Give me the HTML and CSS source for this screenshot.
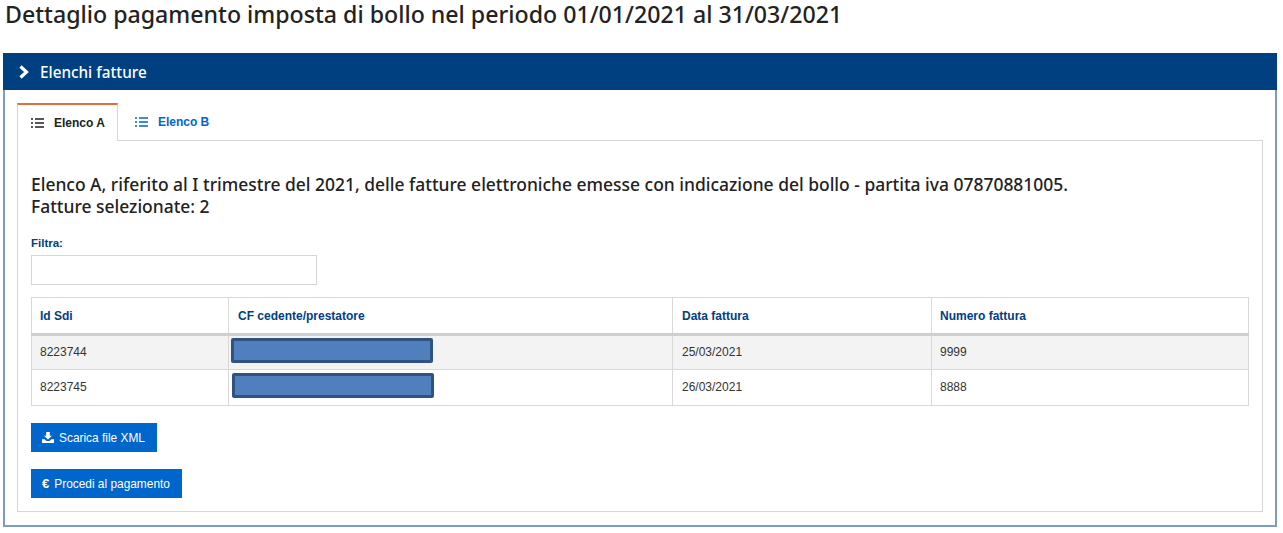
FILE: index.html
```html
<!DOCTYPE html>
<html lang="it">
<head>
    <meta charset="UTF-8">
    <meta name="viewport" content="width=device-width, initial-scale=1.0">
    <title>Dettaglio pagamento imposta di bollo</title>
    <link rel="stylesheet" href="styles.css">
</head>
<body>
    <h1 class="page-title">Dettaglio pagamento imposta di bollo nel periodo 01/01/2021 al 31/03/2021</h1>

    <section class="panel">
        <div class="panel-head">
            <svg class="chevron" width="12" height="14" viewBox="0 0 12 14"><path d="M2.5 1.5 8.5 7l-6 5.5" fill="none" stroke="#fff" stroke-width="3.2"/></svg>
            <span>Elenchi fatture</span>
        </div>

        <div class="panel-body">
            <ul class="tabs">
                <li class="tab active">
                    <svg class="list-icon" width="13" height="10" viewBox="0 0 13 10"><path d="M0 1h2M4 1h9M0 5h2M4 5h9M0 9h2M4 9h9" fill="none" stroke="currentColor" stroke-width="1.7"/></svg>
                    Elenco A
                </li>
                <li class="tab">
                    <svg class="list-icon" width="13" height="10" viewBox="0 0 13 10"><path d="M0 1h2M4 1h9M0 5h2M4 5h9M0 9h2M4 9h9" fill="none" stroke="currentColor" stroke-width="1.7"/></svg>
                    Elenco B
                </li>
            </ul>

            <div class="tab-content">
                <p class="intro">Elenco A, riferito al I trimestre del 2021, delle fatture elettroniche emesse con indicazione del bollo - partita iva 07870881005.<br>Fatture selezionate: 2</p>

                <label class="filter-label" for="filtra">Filtra:</label>
                <input class="filter-input" type="text" id="filtra">

                <table class="invoices">
                    <colgroup>
                        <col class="col-id">
                        <col class="col-cf">
                        <col class="col-date">
                        <col>
                    </colgroup>
                    <thead>
                        <tr>
                            <th>Id Sdi</th>
                            <th class="shifted">CF cedente/prestatore</th>
                            <th class="shifted">Data fattura</th>
                            <th>Numero fattura</th>
                        </tr>
                    </thead>
                    <tbody>
                        <tr class="odd">
                            <td>8223744</td>
                            <td class="cf-cell"><div class="redacted"></div></td>
                            <td class="shifted">25/03/2021</td>
                            <td>9999</td>
                        </tr>
                        <tr>
                            <td>8223745</td>
                            <td class="cf-cell"><div class="redacted second"></div></td>
                            <td class="shifted">26/03/2021</td>
                            <td>8888</td>
                        </tr>
                    </tbody>
                </table>

                <button class="btn" type="button">
                    <svg width="12" height="11" viewBox="0 0 12 11"><path d="M4.2 0h3.6v3.8H10L6 7.4 2 3.8h2.2zM0 7.2h2.6L4.4 9h3.2l1.8-1.8H12V11H0z" fill="#fff"/></svg>
                    Scarica file XML
                </button>
                <button class="btn" type="button"><span class="euro">€</span> Procedi al pagamento</button>
            </div>
        </div>
    </section>
</body>
</html>
```

FILE: styles.css
```css
* {
    box-sizing: border-box;
}

body {
    margin: 0;
    font-family: "Liberation Sans", Arial, sans-serif;
    background-color: #fff;
    color: #333;
}

.page-title {
    margin: 0;
    padding: 0 0 0 5px;
    height: 53px;
    font-family: "Noto Sans", sans-serif;
    font-size: 23.15px;
    font-weight: 500;
    line-height: 28px;
    color: #222;
}

.panel {
    margin: 0 6px 0 3px;
    height: 474px;
    border: 2px solid #7f9cc0;
    border-top: 0;
}

.panel-head {
    display: flex;
    align-items: center;
    gap: 10px;
    height: 37px;
    margin: 0 -2px;
    padding-left: 15px;
    background-color: #004080;
    color: #fff;
    font-family: "Noto Sans", sans-serif;
    font-size: 15.3px;
    font-weight: 500;
}

.panel-body {
    padding: 13px 12px 0;
}

.tabs {
    display: flex;
    margin: 0;
    padding: 0;
    list-style: none;
}

.tab {
    display: flex;
    align-items: center;
    gap: 10px;
    height: 37px;
    padding: 0 14px 0 17px;
    font-size: 12px;
    font-weight: 700;
    color: #0066cc;
}

.tab.active {
    position: relative;
    z-index: 1;
    height: 38px;
    margin-bottom: -1px;
    padding: 0 12px 0 13px;
    background-color: #fff;
    color: #222;
    border: 1px solid #d6d6d6;
    border-top: 2px solid #e0703a;
    border-bottom: 0;
}

.tab-content {
    height: 372px;
    padding: 32px 13px 0;
    border: 1px solid #d6d6d6;
}

.intro {
    margin: 0 0 20px;
    font-family: "Noto Sans", sans-serif;
    font-size: 17.44px;
    font-weight: 500;
    line-height: 22px;
    color: #222;
}

.filter-label {
    display: block;
    margin-bottom: 5px;
    font-size: 11.5px;
    font-weight: 700;
    line-height: 13px;
    color: #004080;
}

.filter-input {
    display: block;
    width: 286px;
    height: 30px;
    margin-bottom: 12px;
    border: 1px solid #d6d6d6;
    background-color: #fff;
}

.invoices {
    width: 1218px;
    border-collapse: collapse;
    table-layout: fixed;
    font-size: 12px;
    margin-bottom: 17px;
}

.col-id {
    width: 197px;
}

.col-cf {
    width: 444px;
}

.col-date {
    width: 259px;
}

.invoices th,
.invoices td {
    padding: 0 8px;
    border: 1px solid #d9d9d9;
    text-align: left;
}

.invoices .shifted {
    padding-left: 9px;
}

.invoices th {
    height: 37px;
    padding-top: 1px;
    border-bottom: 3px solid #cfcfcf;
    font-weight: 700;
    color: #004080;
}

.invoices td {
    height: 36px;
    padding-bottom: 2px;
    color: #333;
}

.invoices .odd td {
    height: 35px;
    background-color: #f3f3f3;
}

.invoices .cf-cell {
    padding: 0 0 0 2px;
}

.redacted {
    width: 202px;
    height: 25px;
    margin-bottom: 5px;
    background-color: #4f7fbc;
    border: 3px solid #2f5280;
    border-radius: 2px;
}

.redacted.second {
    margin-left: 1px;
}

.btn {
    display: flex;
    align-items: center;
    gap: 5px;
    height: 29px;
    margin-bottom: 17px;
    padding: 0 12px 0 11px;
    border: 0;
    background-color: #0066cc;
    color: #fff;
    font-family: "Liberation Sans", Arial, sans-serif;
    font-size: 11.9px;
}

.euro {
    font-size: 13px;
    font-weight: 700;
}
```
